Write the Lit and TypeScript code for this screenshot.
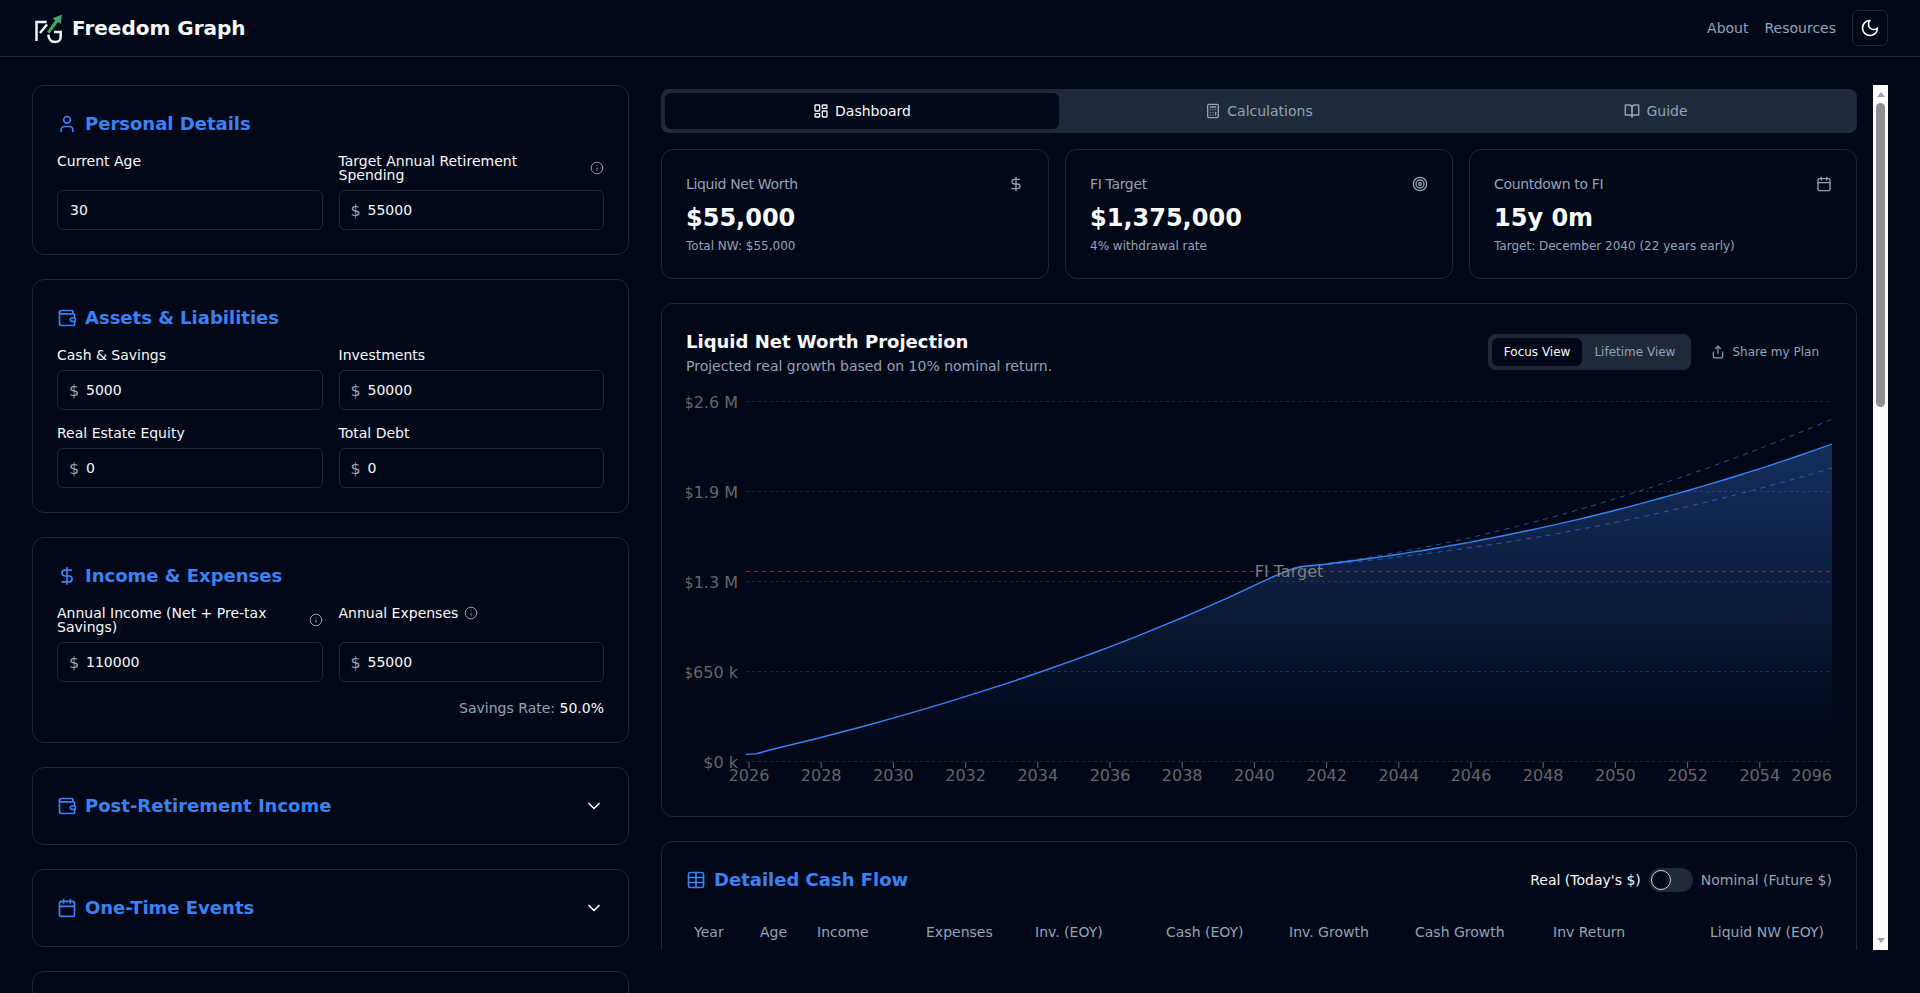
import { LitElement, html, css, svg } from "lit";
import { customElement } from "lit/decorators.js";

const ICONS: Record<string, unknown> = {
    user: svg`<path d="M19 21v-2a4 4 0 0 0-4-4H9a4 4 0 0 0-4 4v2"/><circle cx="12" cy="7" r="4"/>`,
    wallet: svg`<path d="M19 7V4a1 1 0 0 0-1-1H5a2 2 0 0 0 0 4h15a1 1 0 0 1 1 1v4h-3a2 2 0 0 0 0 4h3a1 1 0 0 0 1-1v-2a1 1 0 0 0-1-1"/><path d="M3 5v14a2 2 0 0 0 2 2h15a1 1 0 0 0 1-1v-4"/>`,
    dollar: svg`<line x1="12" x2="12" y1="2" y2="22"/><path d="M17 5H9.5a3.5 3.5 0 0 0 0 7h5a3.5 3.5 0 0 1 0 7H6"/>`,
    calendar: svg`<path d="M8 2v4"/><path d="M16 2v4"/><rect width="18" height="18" x="3" y="4" rx="2"/><path d="M3 10h18"/>`,
    chevron: svg`<path d="m6 9 6 6 6-6"/>`,
    info: svg`<circle cx="12" cy="12" r="10"/><path d="M12 16v-4"/><path d="M12 8h.01"/>`,
    moon: svg`<path d="M12 3a6 6 0 0 0 9 9 9 9 0 1 1-9-9Z"/>`,
    dashboard: svg`<rect width="7" height="9" x="3" y="3" rx="1"/><rect width="7" height="5" x="14" y="3" rx="1"/><rect width="7" height="9" x="14" y="12" rx="1"/><rect width="7" height="5" x="3" y="16" rx="1"/>`,
    calculator: svg`<rect width="16" height="20" x="4" y="2" rx="2"/><line x1="8" x2="16" y1="6" y2="6"/><line x1="16" x2="16" y1="14" y2="18"/><path d="M16 10h.01"/><path d="M12 10h.01"/><path d="M8 10h.01"/><path d="M12 14h.01"/><path d="M8 14h.01"/><path d="M12 18h.01"/><path d="M8 18h.01"/>`,
    book: svg`<path d="M2 3h6a4 4 0 0 1 4 4v14a3 3 0 0 0-3-3H2z"/><path d="M22 3h-6a4 4 0 0 0-4 4v14a3 3 0 0 1 3-3h7z"/>`,
    target: svg`<circle cx="12" cy="12" r="10"/><circle cx="12" cy="12" r="6"/><circle cx="12" cy="12" r="2"/>`,
    share: svg`<path d="M4 12v8a2 2 0 0 0 2 2h12a2 2 0 0 0 2-2v-8"/><polyline points="16 6 12 2 8 6"/><line x1="12" x2="12" y1="2" y2="15"/>`,
    table: svg`<path d="M12 3v18"/><rect width="18" height="18" x="3" y="3" rx="2"/><path d="M3 9h18"/><path d="M3 15h18"/>`,
};

const icon = (name: string, cls = "i16") =>
    html`<svg class="icon ${cls}" viewBox="0 0 24 24">${ICONS[name]}</svg>`;

// chart series, in page pixels read off the design (the viewBox below uses the same space)
type Pt = [number, number];

const SOLID: Pt[] = [[746, 754.4], [757, 753.6]];
const UPPER: Pt[] = [];
const LOWER: Pt[] = [];

// accumulation phase, up to the FI point
for (let x = 770; x <= 1276; x += 46) {
    SOLID.push([x, 750 - 171 * (Math.exp(0.00139 * (x - 770)) - 1)]);
}
// after FI the saving stops, and the line bends
for (let i = 0; i <= 22; i++) {
    const dx = (i * 534) / 22;
    const x = 1298 + dx;
    const y = 567.2 - 0.105 * dx - 0.000235 * dx * dx;
    SOLID.push([x, y]);
    UPPER.push([x, y - 25 * Math.pow(dx / 534, 1.5)]);
    LOWER.push([x, y + 24 * Math.pow(dx / 534, 1.3)]);
}

function smooth(points: Pt[]) {
    let d = `M${points[0][0]} ${points[0][1]}`;
    for (let i = 0; i < points.length - 1; i++) {
        const p0 = points[Math.max(i - 1, 0)];
        const p1 = points[i];
        const p2 = points[i + 1];
        const p3 = points[Math.min(i + 2, points.length - 1)];
        const k = 0.12;
        const c1x = p1[0] + (p2[0] - p0[0]) * k;
        const c1y = p1[1] + (p2[1] - p0[1]) * k;
        const c2x = p2[0] - (p3[0] - p1[0]) * k;
        const c2y = p2[1] - (p3[1] - p1[1]) * k;
        d += ` C${c1x.toFixed(1)} ${c1y.toFixed(1)} ${c2x.toFixed(1)} ${c2y.toFixed(1)} ${p2[0].toFixed(1)} ${p2[1].toFixed(1)}`;
    }
    return d;
}

const GRID = [
    { y: 401.5, label: "$2.6 M" },
    { y: 491.5, label: "$1.9 M" },
    { y: 581.5, label: "$1.3 M" },
    { y: 671.5, label: "$650 k" },
    { y: 761.5, label: "$0 k" },
];
const YEARS = Array.from({ length: 15 }, (_, i) => ({ x: 749 + i * 72.2, year: 2026 + i * 2 }));

@customElement("projection-chart")
export class ProjectionChart extends LitElement {
    static styles = css`
        :host {
            display: block;
            height: 400px;
        }
        svg {
            display: block;
            width: 100%;
            height: 100%;
        }
        .grid {
            stroke: #1e293b;
            stroke-dasharray: 3 3;
        }
        .fi-line {
            stroke: #ef4444;
            stroke-opacity: 0.5;
            stroke-dasharray: 4 4;
        }
        .tick {
            stroke: #666;
        }
        .axis {
            fill: #666;
            font-size: 16px;
        }
        .fi-label {
            fill: #808080;
            font-size: 16px;
            text-anchor: middle;
        }
        .line {
            fill: none;
            stroke: #3b82f6;
            stroke-width: 1.4;
        }
        .band {
            fill: none;
            stroke: #3b82f6;
            stroke-opacity: 0.6;
            stroke-dasharray: 5 5;
        }
    `;

    render() {
        const line = smooth(SOLID);
        return html`
            <svg viewBox="686 392 1146 400">
                <defs>
                    <linearGradient id="nw" x1="0" y1="0" x2="0" y2="1">
                        <stop offset="5%" stop-color="#3b82f6" stop-opacity="0.3"></stop>
                        <stop offset="95%" stop-color="#3b82f6" stop-opacity="0"></stop>
                    </linearGradient>
                </defs>
                ${GRID.map((g) => svg`
                    <line class="grid" x1="746" x2="1832" y1=${g.y} y2=${g.y}></line>
                    <text class="axis" x="738" y=${g.y + 6} text-anchor="end">${g.label}</text>
                `)}
                ${YEARS.map((t) => svg`
                    <line class="tick" x1=${t.x} x2=${t.x} y1="762" y2="768"></line>
                    <text class="axis" x=${t.x} y="781" text-anchor="middle">${t.year}</text>
                `)}
                <text class="axis" x="1832" y="781" text-anchor="end">2096</text>
                <path d="${line} L1832 762 L746 762 Z" fill="url(#nw)"></path>
                <path class="band" d=${smooth(UPPER)}></path>
                <path class="band" d=${smooth(LOWER)}></path>
                <path class="line" d=${line}></path>
                <line class="fi-line" x1="746" x2="1832" y1="571.5" y2="571.5"></line>
                <text class="fi-label" x="1289" y="577">FI Target</text>
            </svg>
        `;
    }
}

const COLUMNS = ["Year", "Age", "Income", "Expenses", "Inv. (EOY)", "Cash (EOY)", "Inv. Growth", "Cash Growth", "Inv Return", "Liquid NW (EOY)"];

@customElement("app-root")
export class AppRoot extends LitElement {
    static styles = css`
        :host {
            display: block;
            height: 100vh;
            overflow: hidden;
            background: #020817;
            color: #f8fafc;
            font-family: "DejaVu Sans", sans-serif;
            font-size: 14px;
            line-height: 20px;
        }
        .icon {
            flex: none;
            fill: none;
            stroke: currentColor;
            stroke-width: 2;
            stroke-linecap: round;
            stroke-linejoin: round;
        }
        .i14 { width: 14px; height: 14px; }
        .i16 { width: 16px; height: 16px; }
        .i20 { width: 20px; height: 20px; }

        .topbar {
            height: 56px;
            box-sizing: content-box;
            border-bottom: 1px solid #1e293b;
            padding: 0 32px;
            display: flex;
            align-items: center;
            justify-content: space-between;
        }
        .brand {
            display: flex;
            align-items: center;
            gap: 8px;
            font-size: 20px;
            line-height: 28px;
            font-weight: 700;
        }
        .logo {
            width: 32px;
            height: 32px;
            fill: none;
            stroke-width: 2.5;
        }
        .logo .w { stroke: #f1f5f9; }
        .logo .g { stroke: #3fa968; stroke-width: 3; }
        .logo .gf { fill: #3fa968; }
        .nav {
            display: flex;
            align-items: center;
            gap: 16px;
            color: #94a3b8;
        }
        .theme {
            width: 36px;
            height: 36px;
            box-sizing: border-box;
            border: 1px solid #1e293b;
            border-radius: 6px;
            display: flex;
            align-items: center;
            justify-content: center;
            color: #f8fafc;
        }

        .layout {
            display: grid;
            grid-template-columns: 597px 1fr;
            gap: 32px;
            padding: 28px 32px 0;
        }
        .left {
            display: flex;
            flex-direction: column;
            gap: 24px;
        }
        .right {
            display: flex;
            height: 865px;
        }
        .panel {
            flex: 1;
            min-width: 0;
            overflow: hidden;
            padding: 4px 16px 0 0;
        }
        .scrollbar {
            flex: none;
            width: 15px;
            display: flex;
            flex-direction: column;
            align-items: center;
            background: #fcfcfc;
        }
        .arrow {
            flex: none;
            display: flex;
            align-items: center;
            justify-content: center;
        }
        .arrow.up {
            height: 18px;
        }
        .arrow.down {
            height: 20px;
            margin-top: auto;
        }
        .arrow::before {
            content: "";
            border-left: 4.5px solid transparent;
            border-right: 4.5px solid transparent;
        }
        .arrow.up::before {
            border-bottom: 5px solid #a3a3a3;
        }
        .arrow.down::before {
            border-top: 5px solid #a3a3a3;
        }
        .thumb {
            width: 9px;
            height: 304px;
            border-radius: 5px;
            background: #8f8f8f;
        }

        .card {
            border: 1px solid #1e293b;
            border-radius: 12px;
            padding: 24px;
        }
        .card-title {
            display: flex;
            align-items: center;
            gap: 8px;
            font-size: 18px;
            line-height: 28px;
            font-weight: 700;
            color: #3b82f6;
        }
        .card-title .chev {
            margin-left: auto;
            color: #f8fafc;
        }
        .fields {
            display: grid;
            grid-template-columns: 1fr 1fr;
            gap: 16px;
            margin-top: 16px;
        }
        .field {
            display: flex;
            flex-direction: column;
            justify-content: space-between;
            gap: 8px;
            min-width: 0;
        }
        .label {
            display: flex;
            align-items: center;
            gap: 6px;
            line-height: 14px;
        }
        .label .icon {
            color: #94a3b8;
            stroke-width: 1.6;
        }
        .input-wrap {
            position: relative;
        }
        .prefix {
            position: absolute;
            left: 12px;
            top: 11px;
            font-size: 16px;
            color: #94a3b8;
        }
        input {
            display: block;
            width: 100%;
            height: 40px;
            box-sizing: border-box;
            border: 1px solid #1e293b;
            border-radius: 6px;
            background: transparent;
            color: #f8fafc;
            font: inherit;
            padding: 0 12px;
            outline: none;
        }
        input.money {
            padding-left: 28px;
        }
        .rate {
            margin-top: 16px;
            text-align: right;
            color: #94a3b8;
        }
        .rate b {
            color: #f8fafc;
            font-weight: 500;
        }
        .next-card {
            height: 100px;
            flex: none;
        }

        .tabs {
            display: grid;
            grid-template-columns: repeat(3, 1fr);
            gap: 3px;
            padding: 4px;
            height: 44px;
            box-sizing: border-box;
            background: #1e293b;
            border-radius: 8px;
            margin-bottom: 16px;
        }
        .tab {
            display: flex;
            align-items: center;
            justify-content: center;
            gap: 6px;
            border-radius: 6px;
            color: #94a3b8;
        }
        .tab.active {
            background: #020817;
            color: #f8fafc;
        }

        .stats {
            display: grid;
            grid-template-columns: repeat(3, 1fr);
            gap: 16px;
            margin-bottom: 24px;
        }
        .stat-head {
            display: flex;
            align-items: center;
            justify-content: space-between;
            letter-spacing: -0.025em;
            color: #94a3b8;
            margin-bottom: 8px;
        }
        .stat-value {
            font-size: 24px;
            line-height: 32px;
            font-weight: 700;
        }
        .stat-sub {
            margin-top: 4px;
            font-size: 12px;
            line-height: 16px;
            color: #94a3b8;
        }

        .chart-card {
            margin-bottom: 24px;
        }
        .chart-head {
            display: flex;
            justify-content: space-between;
            align-items: center;
            margin-bottom: 16px;
        }
        .chart-title {
            font-size: 18px;
            line-height: 28px;
            font-weight: 700;
        }
        .chart-sub {
            color: #94a3b8;
        }
        .chart-actions {
            display: flex;
            align-items: center;
            gap: 8px;
            font-size: 12px;
            line-height: 16px;
        }
        .segment {
            display: flex;
            padding: 4px;
            background: #1e293b;
            border-radius: 8px;
            color: #94a3b8;
        }
        .segment span {
            padding: 6px 12px;
            border-radius: 6px;
        }
        .segment .on {
            background: #020817;
            color: #f8fafc;
        }
        .share {
            display: flex;
            align-items: center;
            gap: 7px;
            padding: 0 13px 0 12px;
            color: #94a3b8;
        }

        .table-card {
            min-height: 200px;
        }
        .table-head {
            display: flex;
            justify-content: space-between;
            align-items: center;
            margin-bottom: 16px;
        }
        .units {
            display: flex;
            align-items: center;
            gap: 8px;
            color: #94a3b8;
        }
        .units .now {
            color: #f8fafc;
        }
        .switch {
            width: 44px;
            height: 24px;
            box-sizing: border-box;
            padding: 2px;
            background: #1e293b;
            border-radius: 12px;
        }
        .knob {
            width: 20px;
            height: 20px;
            box-sizing: border-box;
            border-radius: 50%;
            background: #020817;
            border: 1px solid #cbd5e1;
        }
        table {
            width: 100%;
            table-layout: fixed;
            border-collapse: collapse;
        }
        th {
            height: 44px;
            padding: 0 8px;
            text-align: left;
            font-weight: 400;
            white-space: nowrap;
            color: #94a3b8;
        }
        th:nth-child(1) { width: 50px; }
        th:nth-child(2) { width: 41px; }
        th:nth-child(3) { width: 93px; }
        th:nth-child(4) { width: 93px; }
        th:nth-child(5) { width: 115px; }
        th:nth-child(6) { width: 107px; }
        th:nth-child(7) { width: 110px; }
        th:nth-child(8) { width: 122px; }
        th:nth-child(9) { width: 141px; }
        th:nth-child(10) { text-align: right; }
    `;

    private field(label: string, value: string, opts: { info?: boolean; money?: boolean } = {}) {
        return html`
            <div class="field">
                <div class="label">
                    <span>${label}</span>
                    ${opts.info ? icon("info", "i14") : ""}
                </div>
                <div class="input-wrap">
                    ${opts.money ? html`<span class="prefix">$</span>` : ""}
                    <input class=${opts.money ? "money" : ""} .value=${value} />
                </div>
            </div>
        `;
    }

    private collapsed(name: string, title: string) {
        return html`
            <section class="card">
                <div class="card-title">
                    ${icon(name, "i20")}
                    <span>${title}</span>
                    ${icon("chevron", "i20 chev")}
                </div>
            </section>
        `;
    }

    private stat(label: string, name: string, value: string, sub: string) {
        return html`
            <div class="card">
                <div class="stat-head"><span>${label}</span>${icon(name)}</div>
                <div class="stat-value">${value}</div>
                <div class="stat-sub">${sub}</div>
            </div>
        `;
    }

    render() {
        return html`
            <header class="topbar">
                <div class="brand">
                    <svg class="logo" viewBox="0 0 32 32">
                        <path class="w" d="M4.500 29V10H14.700"></path>
                        <path class="w" d="M8 21 15 12.500"></path>
                        <path class="g" d="M16.300 20.700 25.500 8"></path>
                        <path class="gf" d="M20.500 6.500 29.800 2.500 28.800 12Z"></path>
                        <path class="w" d="M16.300 22.700Q17 30 23 30T28.700 24V20H22"></path>
                    </svg>
                    <span>Freedom Graph</span>
                </div>
                <nav class="nav">
                    <span>About</span>
                    <span>Resources</span>
                    <div class="theme">${icon("moon", "i20")}</div>
                </nav>
            </header>
            <div class="layout">
                <aside class="left">
                    <section class="card">
                        <div class="card-title">${icon("user", "i20")}<span>Personal Details</span></div>
                        <div class="fields">
                            ${this.field("Current Age", "30")}
                            ${this.field("Target Annual Retirement Spending", "55000", { info: true, money: true })}
                        </div>
                    </section>
                    <section class="card">
                        <div class="card-title">${icon("wallet", "i20")}<span>Assets &amp; Liabilities</span></div>
                        <div class="fields">
                            ${this.field("Cash & Savings", "5000", { money: true })}
                            ${this.field("Investments", "50000", { money: true })}
                            ${this.field("Real Estate Equity", "0", { money: true })}
                            ${this.field("Total Debt", "0", { money: true })}
                        </div>
                    </section>
                    <section class="card">
                        <div class="card-title">${icon("dollar", "i20")}<span>Income &amp; Expenses</span></div>
                        <div class="fields">
                            ${this.field("Annual Income (Net + Pre-tax Savings)", "110000", { info: true, money: true })}
                            ${this.field("Annual Expenses", "55000", { info: true, money: true })}
                        </div>
                        <div class="rate">Savings Rate: <b>50.0%</b></div>
                    </section>
                    ${this.collapsed("wallet", "Post-Retirement Income")}
                    ${this.collapsed("calendar", "One-Time Events")}
                    <section class="card next-card"></section>
                </aside>
                <div class="right">
                    <main class="panel">
                        <div class="tabs">
                            <div class="tab active">${icon("dashboard")}<span>Dashboard</span></div>
                            <div class="tab">${icon("calculator")}<span>Calculations</span></div>
                            <div class="tab">${icon("book")}<span>Guide</span></div>
                        </div>
                        <div class="stats">
                            ${this.stat("Liquid Net Worth", "dollar", "$55,000", "Total NW: $55,000")}
                            ${this.stat("FI Target", "target", "$1,375,000", "4% withdrawal rate")}
                            ${this.stat("Countdown to FI", "calendar", "15y 0m", "Target: December 2040 (22 years early)")}
                        </div>
                        <section class="card chart-card">
                            <div class="chart-head">
                                <div>
                                    <div class="chart-title">Liquid Net Worth Projection</div>
                                    <div class="chart-sub">Projected real growth based on 10% nominal return.</div>
                                </div>
                                <div class="chart-actions">
                                    <div class="segment"><span class="on">Focus View</span><span>Lifetime View</span></div>
                                    <div class="share">${icon("share", "i14")}<span>Share my Plan</span></div>
                                </div>
                            </div>
                            <projection-chart></projection-chart>
                        </section>
                        <section class="card table-card">
                            <div class="table-head">
                                <div class="card-title">${icon("table", "i20")}<span>Detailed Cash Flow</span></div>
                                <div class="units">
                                    <span class="now">Real (Today's $)</span>
                                    <div class="switch"><div class="knob"></div></div>
                                    <span>Nominal (Future $)</span>
                                </div>
                            </div>
                            <table>
                                <thead>
                                    <tr>${COLUMNS.map((c) => html`<th>${c}</th>`)}</tr>
                                </thead>
                            </table>
                        </section>
                    </main>
                    <div class="scrollbar">
                        <div class="arrow up"></div>
                        <div class="thumb"></div>
                        <div class="arrow down"></div>
                    </div>
                </div>
            </div>
        `;
    }
}
